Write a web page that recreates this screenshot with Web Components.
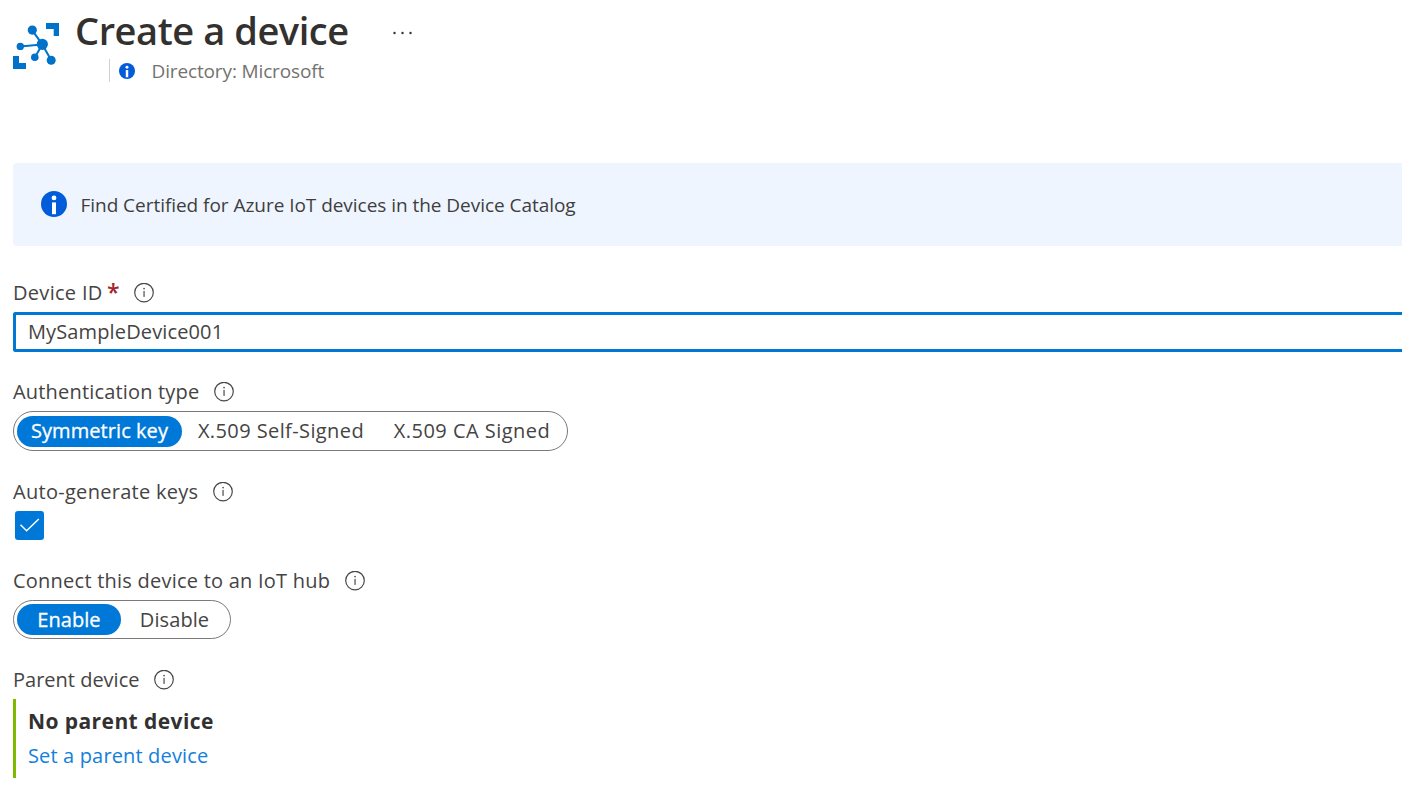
<!DOCTYPE html>
<html lang="en">
<head>
<meta charset="utf-8">
<title>Create a device</title>
<style>
  html, body { margin: 0; background: #fff; overflow: hidden; }
  body { font: 20px/28px "Open Sans", "Noto Sans", sans-serif; color: #323130; }
</style>
</head>
<body>
<device-page></device-page>
<script>
const define = (name, html, setup) => {
  const template = document.createElement('template');
  template.innerHTML = html;
  customElements.define(name, class extends HTMLElement {
    connectedCallback() {
      if (this.shadowRoot) return;
      this.attachShadow({ mode: 'open' }).append(template.content.cloneNode(true));
      if (setup) setup(this, this.shadowRoot);
    }
  });
};

define('iot-icon', `
  <style>:host { display: block; width: 48px; height: 48px; } svg { display: block; }</style>
  <svg width="48" height="48" viewBox="12 22 48 48" fill="#0072c9">
    <path d="M46 23H59V36H53.7V29H46ZM13 56H19V63H26V69H13Z"/>
    <path d="M32.3 30.3 42.3 44.5 20.3 46.4M42.3 44.5 34.8 57.4M42.3 44.5 51.2 60.3" fill="none" stroke="#0072c9" stroke-width="2"/>
    <circle cx="32.3" cy="30.1" r="4.6"/><circle cx="42.3" cy="44.3" r="5.6"/>
    <circle cx="20.3" cy="46.4" r="3.7"/><circle cx="34.8" cy="57.2" r="3.8"/><circle cx="51.2" cy="60.2" r="4.5"/>
  </svg>`);

define('info-badge', `
  <style>:host { display: block; width: var(--size, 26px); height: var(--size, 26px); flex: none; } svg { display: block; width: 100%; height: 100%; }</style>
  <svg viewBox="0 0 26 26"><circle cx="13" cy="13" r="13" fill="#015cda"/><g fill="#fff"><circle cx="13" cy="6.9" r="2.4"/><rect x="11" y="11.4" width="4" height="11.8"/></g></svg>`);

define('info-outline', `
  <style>:host { display: block; width: 20px; height: 20px; flex: none; } svg { display: block; }</style>
  <svg width="20" height="20" viewBox="0 0 20 20"><circle cx="10" cy="9.6" r="9.3" fill="none" stroke="#4a4948" stroke-width="1.2"/><rect x="9.4" y="7.9" width="1.3" height="6" fill="#5a5958"/><circle cx="10.05" cy="5.6" r=".9" fill="#5a5958"/></svg>`);

define('page-header', `
  <style>
    :host { display: flex; height: 163px; box-sizing: border-box; padding: 22px 0 0 12px; }
    .text { margin: -18px 0 0 15px; }
    .row { display: flex; align-items: center; }
    h1 { margin: 0; font-size: 38px; font-weight: 600; line-height: 52px; letter-spacing: -.44px; }
    svg { display: block; margin: 5px 0 0 44px; }
    .sub { width: max-content; height: 23px; margin: 3px 0 0 34px; padding-left: 9px; border-left: 1px solid #d2d0ce; font-size: 19px; line-height: 23px; letter-spacing: -.136px; color: #737270; }
    .sub slot { display: block; padding-top: 1px; }
    info-badge { --size: 16px; margin-right: 16.5px; }
  </style>
  <iot-icon></iot-icon>
  <div class="text">
    <div class="row"><h1><slot name="title"></slot></h1>
      <svg width="20" height="4" viewBox="0 0 20 4" fill="#323130"><circle cx="1.5" cy="2" r="1.2"/><circle cx="9.5" cy="2" r="1.2"/><circle cx="17.5" cy="2" r="1.2"/></svg></div>
    <div class="row sub"><info-badge></info-badge><div><slot name="subtitle"></slot></div></div>
  </div>`);

define('info-banner', `
  <style>:host { display: flex; align-items: center; height: 83px; box-sizing: border-box; margin: 0 0 32px 13px; padding: 0 0 1px 28px; gap: 13.5px; background: #eef5ff; border-radius: 4px 0 0 4px; font-size: 19px; letter-spacing: -.04px; white-space: nowrap; color: #3f3e3d; } span { padding-top: 1px; }</style>
  <info-badge></info-badge><span><slot></slot></span>`);

define('form-field', `
  <style>
    :host { display: block; margin: 0 0 26px 13px; }
    .label { display: flex; align-items: center; height: 28px; margin-bottom: 6px; white-space: nowrap; color: #454443; }
    .name { padding-top: 2px; }
    info-outline { margin-left: 15px; margin-top: 1px; }
    .required { color: #a4262c; font-weight: 600; font-size: 23px; height: 28px; margin-left: 4.5px; }
    .required + info-outline { margin-left: 14px; }
  </style>
  <div class="label"><span class="name"></span><info-outline></info-outline></div>
  <slot></slot>`, (host, root) => {
    const name = root.querySelector('.name');
    name.textContent = host.getAttribute('label');
    if (host.hasAttribute('required')) {
      const mark = document.createElement('span');
      mark.className = 'required';
      mark.textContent = '*';
      name.after(mark);
    }
  });

define('text-box', `
  <style>:host { display: flex; align-items: center; height: 40px; box-sizing: border-box; padding: 0 0 1px 12px; border: solid #0078d4; border-width: 2.5px 0 2.5px 2.5px; border-width: 3px 0 3px 3px; border-radius: 3px 0 0 3px; letter-spacing: .13px; color: #454443; }</style>
  <slot></slot>`);

define('toggle-group', `
  <style>:host { display: flex; width: var(--w); height: var(--h, 40px); box-sizing: border-box; padding: var(--top, 4px) 3px 0; border: 1px solid #7a7978; border-radius: 20px; }</style>
  <slot></slot>`);

define('toggle-option', `
  <style>
    :host { display: flex; height: 31px; width: var(--w); flex: none; box-sizing: border-box; justify-content: center; border-radius: 16px; line-height: var(--line, 30px); white-space: nowrap; color: #454443; }
    :host([selected]) { background: #0078d7; color: #fff; -webkit-text-stroke: .3px #fff; }
  </style>
  <span><slot></slot></span>`);

define('check-box', `
  <style>:host { display: block; width: 29px; height: 29px; margin-left: 2px; background: #0078d7; border-radius: 3px; } svg { display: block; }</style>
  <svg width="29" height="29" viewBox="0 0 29 29"><path d="M5.5 13.8 11.6 19.7 23.8 8" fill="none" stroke="#fff" stroke-width="1.5"/></svg>`);

define('parent-device', `
  <style>
    :host { display: block; height: 79px; box-sizing: border-box; padding: 7px 0 0 12px; border-left: 3px solid #7fba00; }
    b { display: block; font-size: 21px; line-height: 30px; letter-spacing: .42px; }
    a { display: block; margin-top: 6px; line-height: 28px; letter-spacing: .15px; color: #1380da; }
  </style>
  <b><slot name="value"></slot></b><a><slot name="action"></slot></a>`);

define('device-page', `
  <style>:host { display: block; width: 1402px; height: 792px; overflow: hidden; }</style>
  <page-header><span slot="title">Create a device</span><span slot="subtitle">Directory: Microsoft</span></page-header>
  <info-banner>Find Certified for Azure IoT devices in the Device Catalog</info-banner>
  <form-field label="Device ID" required style="letter-spacing:.3px;margin-bottom:25px"><text-box>MySampleDevice001</text-box></form-field>
  <form-field label="Authentication type" style="letter-spacing:.18px">
    <toggle-group style="--w:555px">
      <toggle-option selected style="--w:165px;letter-spacing:.07px">Symmetric key</toggle-option>
      <toggle-option style="--w:198px;letter-spacing:.4px">X.509 Self-Signed</toggle-option>
      <toggle-option style="--w:184px;letter-spacing:.47px">X.509 CA Signed</toggle-option>
    </toggle-group>
  </form-field>
  <form-field label="Auto-generate keys" style="letter-spacing:.29px"><check-box></check-box></form-field>
  <form-field label="Connect this device to an IoT hub" style="letter-spacing:.235px">
    <toggle-group style="--w:218px;--h:39px;--top:3px;--line:32px">
      <toggle-option selected style="--w:104px;letter-spacing:.05px">Enable</toggle-option>
      <toggle-option style="--w:107px;letter-spacing:.09px">Disable</toggle-option>
    </toggle-group>
  </form-field>
  <form-field label="Parent device" style="letter-spacing:0">
    <parent-device><span slot="value">No parent device</span><span slot="action">Set a parent device</span></parent-device>
  </form-field>`);
</script>
</body>
</html>
